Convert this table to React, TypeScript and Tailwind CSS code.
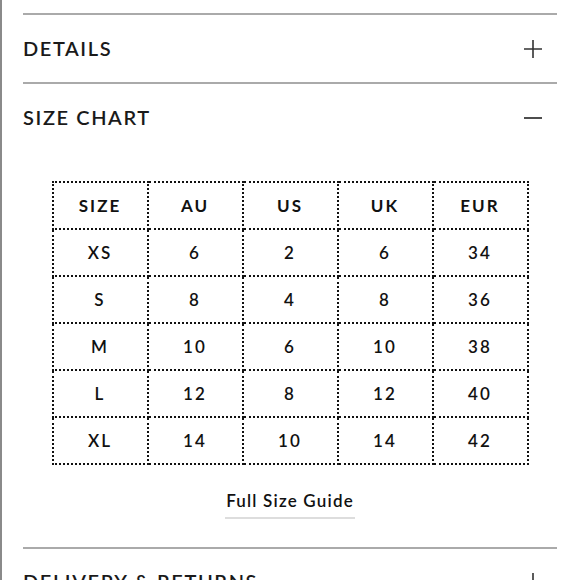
const ROWS = [
  ['SIZE', 'AU', 'US', 'UK', 'EUR'],
  ['XS', '6', '2', '6', '34'],
  ['S', '8', '4', '8', '36'],
  ['M', '10', '6', '10', '38'],
  ['L', '12', '8', '12', '40'],
  ['XL', '14', '10', '14', '42'],
];

function Plus() {
  return (
    <svg width="20" height="20" viewBox="0 0 20 20" className="shrink-0">
      <path d="M1 10h18M10 1v18" stroke="#333" strokeWidth="1.6" />
    </svg>
  );
}

function Minus() {
  return (
    <svg width="20" height="20" viewBox="0 0 20 20" className="shrink-0">
      <path d="M1 10h18" stroke="#222" strokeWidth="1.6" />
    </svg>
  );
}

export default function App() {
  return (
    <div className="w-[580px] h-[580px] overflow-hidden bg-white border-l-2 border-[#8a8a8a]" style={{ fontFamily: 'Lato, "Open Sans", sans-serif' }}>
      <div className="pl-[21px] pr-[23px] pt-[13px]">
        <div className="border-t-2 border-[#aaa] h-[69px] flex items-center justify-between pr-[14px]">
          <span className="text-[20px] font-semibold tracking-[0.08em] text-[#1a1a1a] mt-[-2px]">DETAILS</span>
          <Plus />
        </div>
        <div className="border-t-2 border-[#aaa] h-[69px] flex items-center justify-between pr-[14px]">
          <span className="text-[20px] font-semibold tracking-[0.08em] text-[#1a1a1a] mt-[-2px]">SIZE CHART</span>
          <Minus />
        </div>
        <div className="pt-[30px] flex flex-col items-center">
          <table className="border-collapse">
            <tbody>
              {ROWS.map((row, i) => (
                <tr key={i}>
                  {row.map((c, j) => (
                    <td
                      key={j}
                      className={`w-[95px] h-[47px] text-center border-2 border-dotted border-[#111] tracking-[0.12em] text-[#111] ${i === 0 ? 'text-[17px] font-bold' : 'text-[17px] font-semibold'}`}
                    >
                      {c}
                    </td>
                  ))}
                </tr>
              ))}
            </tbody>
          </table>
          <div className="mt-[23px] text-[17px] font-semibold tracking-[0.07em] text-[#111] border-b-2 border-[#ddd] pb-[3px] px-[1px]">
            Full Size Guide
          </div>
        </div>
        <div className="mt-[28px] border-t-2 border-[#aaa] h-[69px] flex items-center justify-between pr-[14px]">
          <span className="text-[20px] font-semibold tracking-[0.08em] text-[#1a1a1a] mt-[-2px]">DELIVERY &amp; RETURNS</span>
          <Plus />
        </div>
      </div>
    </div>
  );
}
